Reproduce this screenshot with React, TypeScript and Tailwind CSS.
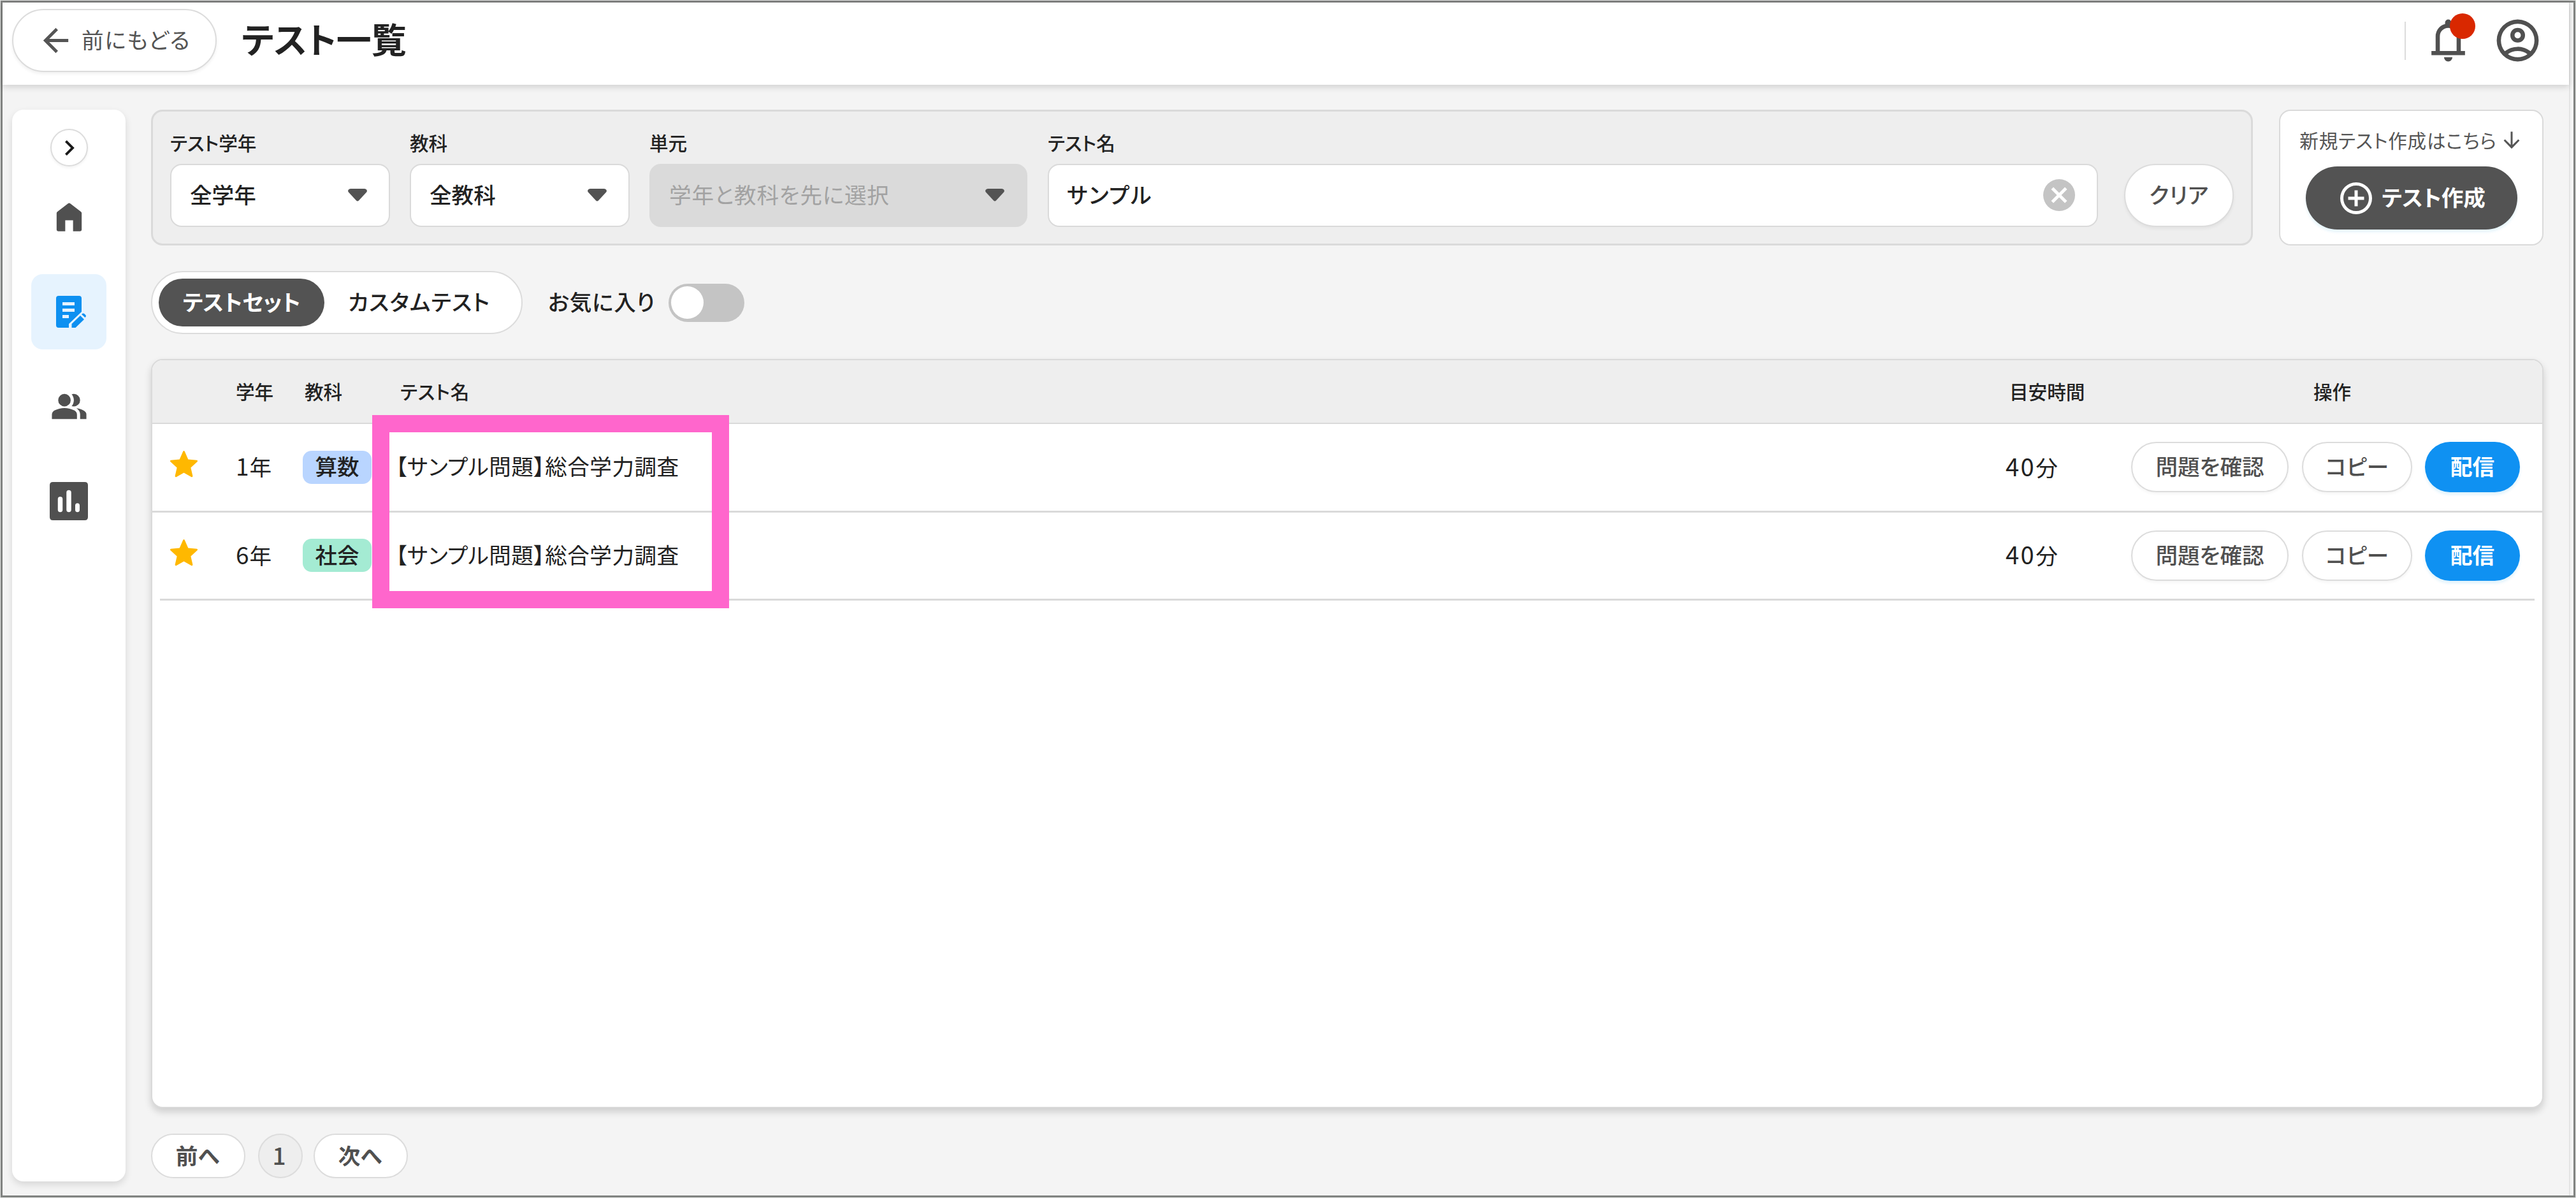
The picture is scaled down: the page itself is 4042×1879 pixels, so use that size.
import type { ReactNode } from "react";
import clsx from "clsx";

interface IconProps {
  d: string;
  className?: string;
}

function Icon({ d, className }: IconProps) {
  return (
    <svg viewBox="0 0 24 24" fill="currentColor" fillRule="evenodd" className={clsx("shrink-0", className)}>
      <path d={d} />
    </svg>
  );
}

const ICONS = {
  back: "M7.825 13l5.6 5.6L12 20l-8-8l8-8l1.425 1.4l-5.6 5.6H20v2z",
  bell: "M4 19v-2h2v-7q0-2.075 1.25-3.687T10.5 4.2v-.7q0-.625.438-1.062T12 2t1.063.438T13.5 3.5v.7q2 .5 3.25 2.113T18 10v7h2v2zm8 3q-.825 0-1.412-.587T10 20h4q0 .825-.587 1.413T12 22m-4-5h8v-7q0-1.65-1.175-2.825T12 6T9.175 7.175T8 10z",
  account:
    "M5.85 17.1q1.275-.975 2.85-1.537T12 15t3.3.563t2.85 1.537q.875-1.025 1.363-2.325T20 12q0-3.325-2.337-5.663T12 4T6.337 6.338T4 12q0 1.475.488 2.775T5.85 17.1M12 13q-1.475 0-2.488-1.012T8.5 9.5t1.013-2.488T12 6t2.488 1.013T15.5 9.5t-1.012 2.488T12 13m0 9q-2.075 0-3.9-.788t-3.175-2.137T2.788 15.9T2 12t.788-3.9t2.137-3.175T8.1 2.788T12 2t3.9.788t3.175 2.137T21.213 8.1T22 12t-.788 3.9t-2.137 3.175t-3.175 2.138T12 22m0-2q1.325 0 2.5-.387t2.15-1.113q-.975-.725-2.15-1.112T12 17t-2.5.388T7.35 18.5q.975.725 2.15 1.113T12 20m0-9q.65 0 1.075-.425T13.5 9.5t-.425-1.075T12 8t-1.075.425T10.5 9.5t.425 1.075T12 11",
  home: "M5 21q-1 0-1-1V9.5q0-.6.4-.9L11.4 3.3q.6-.5 1.2 0L19.6 8.6q.4.3.4.9V20q0 1-1 1h-4.5v-7h-5v7z",
  chevron: "M12.6 12L8 7.4L9.4 6l6 6l-6 6L8 16.6z",
  people:
    "M1 20v-2.8q0-.85.438-1.562T2.6 14.55q1.55-.775 3.15-1.162T9 13t3.25.388t3.15 1.162q.725.375 1.163 1.088T17 17.2V20zm18 0v-3q0-1.1-.612-2.113T16.65 13.15q1.275.15 2.4.513t2.1.887q.9.5 1.375 1.112T23 17v3zM9 12q-1.65 0-2.825-1.175T5 8t1.175-2.825T9 4t2.825 1.175T13 8t-1.175 2.825T9 12m10-4q0 1.65-1.175 2.825T15 12q-.275 0-.7-.062t-.7-.138q.675-.8 1.038-1.775T15 8t-.362-2.025T13.6 4.2q.35-.125.7-.162T15 4q1.65 0 2.825 1.175T19 8",
  chart:
    "M2 0h20q2 0 2 2v20q0 2-2 2H2q-2 0-2-2V2q0-2 2-2zM6.6 9.2q-1.5 0-1.5 1.5v6.7q0 1.5 1.5 1.5t1.5-1.5v-6.7q0-1.5-1.5-1.5zM12 5.1q-1.5 0-1.5 1.5v10.8q0 1.500 1.500 1.500t1.500-1.500V6.600q0-1.500-1.500-1.500zM17.400 13.300q-1.400 0-1.400 1.500v2.600q0 1.500 1.400 1.500t1.400-1.500v-2.600q0-1.500-1.400-1.500z",
  star: "M11.300 1.100q.7-1.200 1.400 0l2.900 6.600l7.200.7q1.200.3.4 1.300l-5.400 4.900l1.600 7q.1 1.200-1 .9L12 18.900l-6.400 3.600q-1.100.3-1-.9l1.600-7L.800 9.700q-.8-1 .4-1.300l7.200-.7z",
  plus: "M11 17h2v-4h4v-2h-4V7h-2v4H7v2h4zm1 5q-2.075 0-3.9-.788t-3.175-2.137T2.788 15.9T2 12t.788-3.9t2.137-3.175T8.1 2.788T12 2t3.9.788t3.175 2.137T21.213 8.1T22 12t-.788 3.9t-2.137 3.175t-3.175 2.138T12 22m0-2q3.35 0 5.675-2.325T20 12t-2.325-5.675T12 4T6.325 6.325T4 12t2.325 5.675T12 20",
  cancel:
    "M8.4 17l3.6-3.6l3.6 3.6l1.4-1.4l-3.6-3.6L17 8.4L15.6 7L12 10.6L8.4 7L7 8.4l3.6 3.6L7 15.6zM12 22q-2.075 0-3.9-.788t-3.175-2.137T2.788 15.9T2 12t.788-3.9t2.137-3.175T8.1 2.788T12 2t3.9.788t3.175 2.137T21.213 8.1T22 12t-.788 3.9t-2.137 3.175t-3.175 2.138T12 22",
  down: "M11 3h2v13.900l5.900-5.900L20.300 12.400L12 20.800L3.700 12.400L5.100 11l5.900 5.900z",
};

const TESTS = [
  { grade: "1", subject: "算数", badge: "bg-[#b9d5ff]", name: "【サンプル問題】総合学力調査", minutes: "40" },
  { grade: "6", subject: "社会", badge: "bg-[#a4ebd3]", name: "【サンプル問題】総合学力調査", minutes: "40" },
];

function Header() {
  return (
    <header className="z-10 flex h-[129px] shrink-0 items-center bg-white pb-[10px] pl-[15px] pr-[41px] shadow-[0_3px_10px_rgba(0,0,0,0.16)]">
      <button className="flex h-[99px] w-[321px] items-center rounded-full border-2 border-[#dcdcdc] bg-white pl-[37px] text-[#555] shadow-[0_3px_5px_rgba(0,0,0,0.06)]">
        <Icon d={ICONS.back} className="size-[59px]" />
        <span className="ml-[11px] pb-1 text-[34.6px] tracking-[1.7px]">前にもどる</span>
      </button>
      <h1 className="ml-[39px] pb-2 text-[55px] font-bold">テスト一覧</h1>
      <div className="ml-auto flex items-center text-[#505050]">
        <div className="h-[60px] w-[2px] bg-[#dcdcdc]" />
        <div className="relative ml-[27px]">
          <Icon d={ICONS.bell} className="size-[79px]" />
          <span className="absolute -top-[3px] left-[42px] size-10 rounded-full bg-[#d92800]" />
        </div>
        <Icon d={ICONS.account} className="ml-[30px] size-[79px]" />
      </div>
    </header>
  );
}

function Sidebar() {
  return (
    <nav className="flex w-[178px] shrink-0 flex-col items-center rounded-[18px] bg-white pt-[30px] text-[#505050] shadow-[0_5px_12px_rgba(0,0,0,0.12)]">
      <button className="flex size-[59px] items-center justify-center rounded-full border-2 border-[#dcdcdc] text-[#1a1a1a] shadow-[0_2px_4px_rgba(0,0,0,0.06)]">
        <Icon d={ICONS.chevron} className="ml-[3px] size-[48px]" />
      </button>
      <Icon d={ICONS.home} className="mt-[50px] size-[59px]" />
      <div className="mt-[60px] flex size-[118px] items-center justify-center rounded-[18px] bg-[#e6f3fe] text-[#0d90f1]">
        <svg viewBox="0 0 47 50" fill="currentColor" className="ml-[6px] h-[50px] w-[47px]">
          <path
            fillRule="evenodd"
            d="M4 0h32q4 0 4 4v21L20 44v6H4q-4 0-4-4V4q0-4 4-4zM10 10v5h19v-5zM10 20v5h19v-5zM10 30v5h10v-5z"
          />
          <path d="M24.500 50v-6L38 31l6 6L30.500 50zM40 29l1.500-1.200q1.500-1 3 .4l1.700 1.700q1.400 1.500.2 3L45.500 34z" />
        </svg>
      </div>
      <Icon d={ICONS.people} className="mt-[60px] size-[59px]" />
      <Icon d={ICONS.chart} className="mt-[89px] size-[60px]" />
    </nav>
  );
}

interface FieldProps {
  label: string;
  className: string;
  children: ReactNode;
}

function Field({ label, className, children }: FieldProps) {
  return (
    <div className={clsx("flex flex-col", className)}>
      <label className="mb-[18px] text-[29.6px] font-medium">{label}</label>
      {children}
    </div>
  );
}

function Select({ value, disabled }: { value: string; disabled?: boolean }) {
  return (
    <div
      className={clsx(
        "flex h-[99px] items-center justify-between rounded-[18px] border-2 border-[#dadada] pl-[29px] pr-[34px] text-[34.6px]",
        disabled ? "bg-[#dadada] tracking-[0.8px] text-[#a2a2a2]" : "bg-white font-medium"
      )}
    >
      <span className="pb-1">{value}</span>
      <svg viewBox="0 0 30 20" className="h-5 w-[30px] text-[#535353]" fill="currentColor">
        <path d="M4 0h22q5 1 3.500 5L17 18.500q-2 2-4 0L.500 5Q-1 1 4 0z" />
      </svg>
    </div>
  );
}

function Filters() {
  return (
    <section className="flex h-[213px] w-[3298px] rounded-[18px] border-[3px] border-[#dadada] bg-[#eee] pl-[27px] pt-[34px]">
      <Field label="テスト学年" className="w-[345px]">
        <Select value="全学年" />
      </Field>
      <Field label="教科" className="ml-[31px] w-[345px]">
        <Select value="全教科" />
      </Field>
      <Field label="単元" className="ml-[31px] w-[593px]">
        <Select value="学年と教科を先に選択" disabled />
      </Field>
      <Field label="テスト名" className="ml-[32px] w-[1648px]">
        <div className="flex h-[99px] items-center justify-between rounded-[18px] border-2 border-[#dadada] bg-white pl-[28px] pr-[29px] text-[34.6px] font-medium">
          <span className="pb-1 tracking-[2px]">サンプル</span>
          <Icon d={ICONS.cancel} className="size-[60px] text-[#c4c4c4]" />
        </div>
      </Field>
      <button className="ml-[41px] mt-[48px] flex h-[99px] w-[172px] items-center justify-center rounded-full border-2 border-[#dcdcdc] bg-white pb-1 text-[34.6px] font-medium tracking-[0.7px] text-[#505050] shadow-[0_3px_5px_rgba(0,0,0,0.05)]">
        クリア
      </button>
    </section>
  );
}

function CreateCard() {
  return (
    <section className="flex h-[213px] w-[415px] flex-col items-center rounded-[18px] border-2 border-[#dadada] bg-white pt-[28px]">
      <div className="flex items-center gap-[5px] text-[29.6px] text-[#555]">
        <span className="tracking-[0.7px]">新規テスト作成はこちら</span>
        <Icon d={ICONS.down} className="size-[36px]" />
      </div>
      <button className="mt-[23px] flex h-[99px] w-[332px] items-center justify-center rounded-full bg-[#535353] text-[34.6px] font-bold text-white shadow-[0_4px_4px_rgba(0,160,230,0.10)]">
        <Icon d={ICONS.plus} className="size-[60px]" />
        <span className="ml-[10px] pb-1">テスト作成</span>
      </button>
    </section>
  );
}

function Tabs() {
  return (
    <div className="mt-10 flex items-center text-[34.6px] font-medium">
      <div className="flex h-[99px] w-[583px] items-center rounded-full border-2 border-[#dcdcdc] bg-white pl-[10px]">
        <div className="flex h-[75px] w-[260px] items-center justify-center rounded-full bg-[#535353] pb-1 font-bold text-white">
          テストセット
        </div>
        <span className="ml-[37px] pb-1 tracking-[1.2px]">カスタムテスト</span>
      </div>
      <span className="ml-10 pb-1 tracking-[0.7px]">お気に入り</span>
      <div className="ml-[21px] flex h-[60px] w-[119px] items-center rounded-full bg-[#c4c4c4] pl-[4px]">
        <div className="size-[51px] rounded-full bg-white" />
      </div>
    </div>
  );
}

const COLS = "grid grid-cols-[131px_108px_150px_2525px_191px_1fr] items-center";
const OUTLINE_BUTTON =
  "flex h-[79px] items-center justify-center rounded-full border-2 border-[#dcdcdc] pb-1 shadow-[0_3px_4px_rgba(0,0,0,0.04)]";

function TestTable() {
  return (
    <section className="relative mt-[39px] h-[1175px] rounded-[18px] border-2 border-[#dadada] bg-white shadow-[0_6px_12px_rgba(0,0,0,0.16)]">
      <div className={clsx(COLS, "h-[100px] rounded-t-[16px] border-b-2 border-[#dadada] bg-[#eee] text-[29.6px] font-medium")}>
        <span />
        <span>学年</span>
        <span>教科</span>
        <span className="tracking-[0.8px]">テスト名</span>
        <span>目安時間</span>
        <span className="pl-[286px]">操作</span>
      </div>
      {TESTS.map((t, i) => (
        <div key={t.grade}>
          <div className={clsx(COLS, "h-[135.5px] text-[34.6px]")}>
            <Icon d={ICONS.star} className="mb-2 ml-[27px] size-[45px] text-[#ffb800]" />
            <span className="pb-1">
              <span className="text-[37px] tracking-[1px]">{t.grade}</span>年
            </span>
            <span className={clsx("-ml-[3px] flex h-[52px] w-[108px] items-center justify-center rounded-[14px] pb-1 font-medium", t.badge)}>
              {t.subject}
            </span>
            <span className="-ml-[7px] whitespace-nowrap pb-1 tracking-[0.5px]">{t.name}</span>
            <span className="-ml-[6px] pb-1">
              <span className="text-[38px] tracking-[2.5px]">{t.minutes}</span>分
            </span>
            <div className="flex font-medium text-[#505050]">
              <button className={clsx(OUTLINE_BUTTON, "w-[247px]")}>問題を確認</button>
              <button className={clsx(OUTLINE_BUTTON, "ml-[21px] w-[173px]")}>コピー</button>
              <button className="ml-[20px] flex h-[79px] w-[149px] items-center justify-center rounded-full bg-[#0f91f2] pb-1 font-bold text-white shadow-[0_4px_4px_rgba(0,160,230,0.12)]">
                配信
              </button>
            </div>
          </div>
          <div className={clsx("h-[3px] bg-[#dadada]", i === TESTS.length - 1 && "mx-3")} />
        </div>
      ))}
      {/* callout around the test names */}
      <div className="absolute left-[345px] top-[86px] h-[303px] w-[560px] border-[27px] border-[#ff66cc]" />
    </section>
  );
}

function Pagination() {
  return (
    <div className="mt-10 flex items-center text-[34.6px] font-bold text-[#505050]">
      <button className="flex h-[70px] w-[148px] items-center justify-center rounded-full border-2 border-[#dcdcdc] bg-white pb-1 pr-[2px]">
        前へ
      </button>
      <button className="ml-5 flex size-[70px] items-center justify-center rounded-full border-2 border-[#dcdcdc] bg-[#eee] pb-1 pr-1 text-[37px] font-medium">
        1
      </button>
      <button className="ml-[17px] flex h-[70px] w-[148px] items-center justify-center rounded-full border-2 border-[#dcdcdc] bg-white pb-1 pr-[2px]">
        次へ
      </button>
    </div>
  );
}

export default function App() {
  return (
    <div className="h-[1879px] w-[4042px] bg-[#e2e4e2] p-px font-['Noto_Sans_CJK_JP',sans-serif] leading-none text-[#222] [font-feature-settings:'palt']">
      <div className="h-full w-full border-[3px] border-[#808280] bg-[#f4f4f4]">
        <div className="flex h-full w-[4029px] flex-col border-r-2 border-[#e4e4e4]">
          <Header />
          <div className="flex grow pb-[22px] pl-[15px] pr-10 pt-[39px]">
            <Sidebar />
            <main className="ml-10 flex grow flex-col">
              <div className="flex justify-between">
                <Filters />
                <CreateCard />
              </div>
              <Tabs />
              <TestTable />
              <Pagination />
            </main>
          </div>
        </div>
      </div>
    </div>
  );
}
